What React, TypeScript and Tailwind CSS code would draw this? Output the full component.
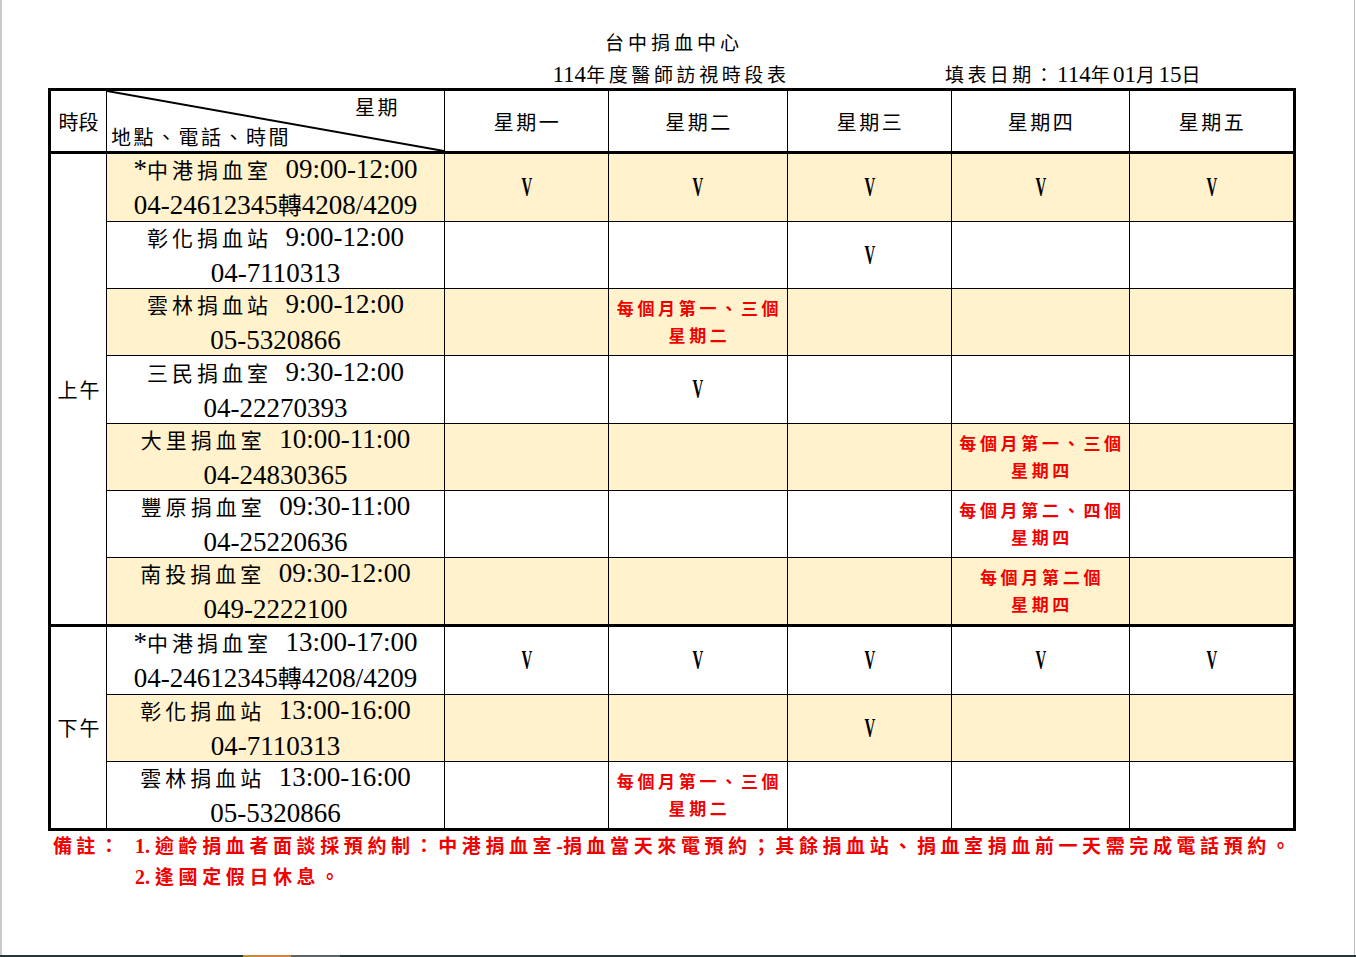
import React from "react";

type Day = "" | "V" | [string, string];
type Row = { place: string; phone: string; hl: boolean; days: Day[] };

const CJK = /([\u3000-\u303f\u4e00-\u9fff\uff00-\uffef]+)/;

// CJK runs get their own size + tracking, latin runs keep the parent size
function Mixed({ text, cjk }: { text: string; cjk: string }) {
  const parts = text.split(CJK);
  return (
    <>
      {parts.map((p, i) =>
        i % 2 === 1 ? (
          <span key={i} className={cjk}>
            {p}
          </span>
        ) : (
          <span key={i}>{p.replace(/ /g, "\u2002")}</span>
        )
      )}
    </>
  );
}

const am: Row[] = [
  { place: "*中港捐血室 09:00-12:00", phone: "04-24612345轉4208/4209", hl: true, days: ["V", "V", "V", "V", "V"] },
  { place: "彰化捐血站 9:00-12:00", phone: "04-7110313", hl: false, days: ["", "", "V", "", ""] },
  { place: "雲林捐血站 9:00-12:00", phone: "05-5320866", hl: true, days: ["", ["每個月第一、三個", "星期二"], "", "", ""] },
  { place: "三民捐血室 9:30-12:00", phone: "04-22270393", hl: false, days: ["", "V", "", "", ""] },
  { place: "大里捐血室 10:00-11:00", phone: "04-24830365", hl: true, days: ["", "", "", ["每個月第一、三個", "星期四"], ""] },
  { place: "豐原捐血室 09:30-11:00", phone: "04-25220636", hl: false, days: ["", "", "", ["每個月第二、四個", "星期四"], ""] },
  { place: "南投捐血室 09:30-12:00", phone: "049-2222100", hl: true, days: ["", "", "", ["每個月第二個", "星期四"], ""] },
];

const pm: Row[] = [
  { place: "*中港捐血室 13:00-17:00", phone: "04-24612345轉4208/4209", hl: false, days: ["V", "V", "V", "V", "V"] },
  { place: "彰化捐血站 13:00-16:00", phone: "04-7110313", hl: true, days: ["", "", "V", "", ""] },
  { place: "雲林捐血站 13:00-16:00", phone: "05-5320866", hl: false, days: ["", ["每個月第一、三個", "星期二"], "", "", ""] },
];

const weekdays = ["星期一", "星期二", "星期三", "星期四", "星期五"];

function DayCell({ d, first, hl }: { d: Day; first: boolean; hl: boolean }) {
  return (
    <div
      className={`border-l border-black flex flex-col items-center justify-center ${first ? "" : "border-t"} ${
        hl ? "bg-[#fff2cc]" : "bg-white"
      }`}
    >
      {d === "V" && <span className="inline-block scale-x-[0.55] font-bold text-[27px] leading-none">V</span>}
      {Array.isArray(d) && (
        <div className="text-[#f00000] font-bold text-[17px] tracking-[3.7px] leading-[27px] text-center pl-[3px] pt-[2px]">
          <div>{d[0]}</div>
          <div>{d[1]}</div>
        </div>
      )}
    </div>
  );
}

function Section({ label, rows, grid, span }: { label: string; rows: Row[]; grid: string; span: string }) {
  return (
    <div className={grid}>
      <div className={`${span} flex items-center justify-center text-[20px] tracking-[2px] pl-[2px] pt-[3px]`}>{label}</div>
      {rows.map((r, i) => (
        <React.Fragment key={r.place}>
          <div
            className={`border-l border-black flex flex-col items-center justify-center text-[27px] leading-[34px] whitespace-nowrap ${
              i === 0 ? "" : "border-t"
            } ${r.hl ? "bg-[#fff2cc]" : "bg-white"}`}
          >
            <div>
              <Mixed text={r.place} cjk="text-[21px] tracking-[4px]" />
            </div>
            <div>
              <Mixed text={r.phone} cjk="text-[24px]" />
            </div>
          </div>
          {r.days.map((d, j) => (
            <DayCell key={j} d={d} first={i === 0} hl={r.hl} />
          ))}
        </React.Fragment>
      ))}
    </div>
  );
}

export default function App() {
  return (
    <div className="w-[1356px] h-[957px] flex flex-col bg-white text-black font-['Liberation_Serif','Noto_Sans_CJK_TC',serif]">
      <div className="flex flex-1 min-h-0">
        <div className="w-[2px] bg-[#c9c9c9]" />
        <main className="flex-1 pl-[46px] pt-[30px]">
          <div className="w-[1248px]">
            <div className="h-[28px] flex items-center justify-center">
              <span className="text-[19px] tracking-[4px] pl-[4px]">台中捐血中心</span>
            </div>
            <div className="h-[30px] grid items-center">
              <div className="col-start-1 row-start-1 justify-self-center text-[23px] pr-[2px]">
                <Mixed text="114年度醫師訪視時段表" cjk="text-[19px] tracking-[3.6px]" />
              </div>
              <div className="col-start-1 row-start-1 ml-[897px] text-[23px] whitespace-nowrap">
                <Mixed text="填表日期：114年01月15日" cjk="text-[19px] tracking-[3.4px]" />
              </div>
            </div>
          </div>

          <div className="w-[1248px] border-[3px] border-black">
            <div className="grid grid-cols-[55px_338px_164px_179px_164px_178px_164px] h-[63px] border-b-[3px] border-black">
              <div className="flex items-center justify-center text-[20px] pt-[3px]">時段</div>
              <div className="relative border-l border-black flex flex-col justify-between pt-[5px] pb-[1px] text-[20px] tracking-[2.5px] leading-[24px]">
                <svg className="absolute inset-0 w-full h-full" viewBox="0 0 100 100" preserveAspectRatio="none">
                  <line x1="0" y1="0" x2="100" y2="100" stroke="black" strokeWidth="2" vectorEffect="non-scaling-stroke" />
                </svg>
                <div className="text-right pr-[44px]">星期</div>
                <div className="pl-[4px]">地點、電話、時間</div>
              </div>
              {weekdays.map((w) => (
                <div key={w} className="border-l border-black flex items-center justify-center text-[20px] tracking-[2.5px] pl-[2px] pt-[4px]">
                  {w}
                </div>
              ))}
            </div>
            <Section
              label="上午"
              rows={am}
              span="row-span-7"
              grid="grid grid-cols-[55px_338px_164px_179px_164px_178px_164px] grid-rows-7 h-[470px]"
            />
            <Section
              label="下午"
              rows={pm}
              span="row-span-3"
              grid="grid grid-cols-[55px_338px_164px_179px_164px_178px_164px] grid-rows-3 h-[204px] border-t-[3px] border-black"
            />
          </div>

          <div className="ml-[5px] flex text-[#f00000] font-bold text-[20px] whitespace-nowrap">
            <div className="w-[82px] leading-[31px]">
              <Mixed text="備註：" cjk="text-[19px] tracking-[4.3px]" />
            </div>
            <div className="leading-[31px]">
              <div>
                <Mixed
                  text={"1.\u2005逾齡捐血者面談採預約制：中港捐血室-捐血當天來電預約；其餘捐血站、捐血室捐血前一天需完成電話預約。"}
                  cjk="text-[19px] tracking-[4.6px]"
                />
              </div>
              <div>
                <Mixed text={"2.\u2005逢國定假日休息。"} cjk="text-[19px] tracking-[4.6px]" />
              </div>
            </div>
          </div>
        </main>
        <div className="w-px bg-[#bdbdbd]" />
        <div className="w-px bg-white" />
      </div>
      <div className="h-[2px] flex bg-[#27363a]">
        <div className="w-[243px]" />
        <div className="w-[48px] bg-[#c8893e]" />
        <div className="w-[49px] bg-[#5b6468]" />
      </div>
    </div>
  );
}
